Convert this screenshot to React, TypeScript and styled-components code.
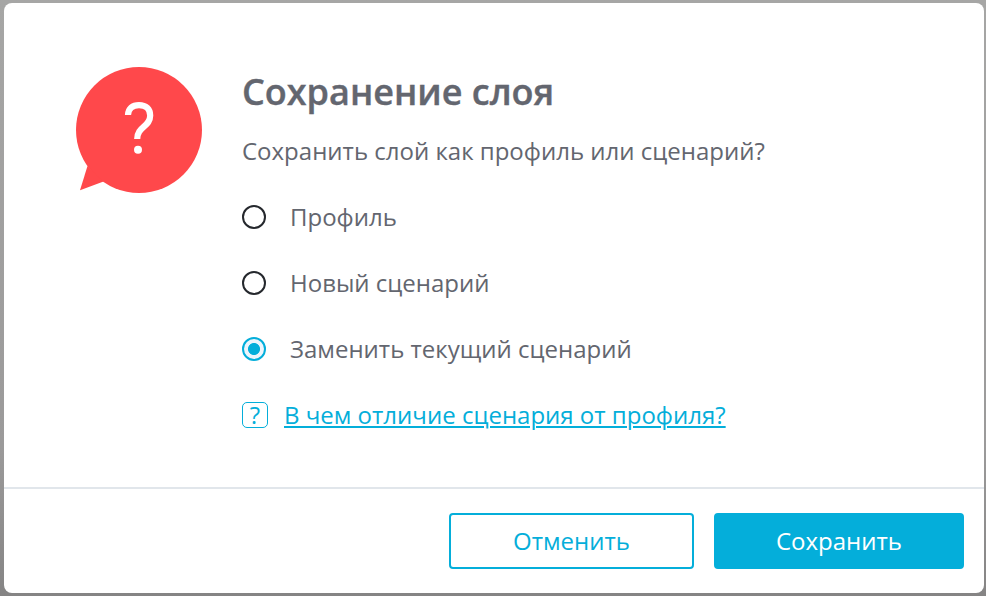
import React, { useState } from "react";
import styled, { createGlobalStyle } from "styled-components";

const ACCENT = "#04aeda";
const TEXT = "#63666f";

const GlobalStyle = createGlobalStyle`
  *, *::before, *::after { box-sizing: border-box; }
  html, body, #root { height: 100%; margin: 0; }
  body {
    font-family: "Open Sans", "Noto Sans", sans-serif;
    font-size: 24px;
    color: ${TEXT};
    overflow: hidden;
  }
`;

const Backdrop = styled.div`
  height: 100%;
  padding: 3px 2px 3px 4px;
  background: linear-gradient(#a6a6a5, #9b9a9a 75%, #858484);
`;

const Dialog = styled.section`
  height: 100%;
  display: flex;
  flex-direction: column;
  background: #fff;
  border-radius: 8px;
`;

const Content = styled.div`
  flex: 1;
  display: flex;
  align-items: flex-start;
  padding: 64px 72px 0;
`;

const Bubble = styled.svg`
  flex: none;
  width: 126px;
  height: 126px;
  margin-right: 40px;
`;

const Details = styled.div`
  flex: 1;
`;

const Title = styled.h1`
  margin: 0;
  font-size: 36px;
  font-weight: 600;
  line-height: 50px;
  -webkit-text-stroke: 0.4px currentColor;
`;

const Message = styled.p`
  margin: 17px 0 33px;
  line-height: 33px;
`;

const Option = styled.label`
  display: flex;
  align-items: center;
  gap: 24px;
  height: 33px;
  margin-bottom: 33px;
  cursor: pointer;
`;

const Radio = styled.input`
  appearance: none;
  flex: none;
  width: 24px;
  height: 24px;
  margin: 0;
  border: 2px solid #25282d;
  border-radius: 50%;

  &:checked {
    border-color: ${ACCENT};
    background: radial-gradient(circle, ${ACCENT} 5.6px, #edf5fc 6.4px);
  }
`;

const HelpRow = styled.div`
  display: flex;
  align-items: center;
  gap: 16px;
  height: 33px;
`;

const HelpBadge = styled.span`
  display: flex;
  align-items: center;
  justify-content: center;
  width: 26px;
  height: 26px;
  border: 1px solid ${ACCENT};
  border-radius: 5px;
  color: ${ACCENT};
  font-size: 24px;
  line-height: 24px;
`;

const HelpLink = styled.a`
  color: ${ACCENT};
  text-decoration: underline;
  text-decoration-thickness: 2px;
  text-underline-offset: 2px;
  line-height: 33px;
`;

const Footer = styled.footer`
  display: flex;
  justify-content: flex-end;
  gap: 20px;
  padding: 24px 20px;
  border-top: 2px solid #e1e6eb;
`;

const Button = styled.button<{ $primary?: boolean }>`
  width: ${(p) => (p.$primary ? 250 : 245)}px;
  height: 56px;
  padding: 0 0 2px;
  border: 2px solid ${ACCENT};
  border-radius: 4px;
  background: ${(p) => (p.$primary ? ACCENT : "#fff")};
  color: ${(p) => (p.$primary ? "#fff" : ACCENT)};
  font: inherit;
`;

const OPTIONS = ["Профиль", "Новый сценарий", "Заменить текущий сценарий"];

export default function App() {
  const [selected, setSelected] = useState(2);

  return (
    <>
      <GlobalStyle />
      <Backdrop>
        <Dialog role="dialog" aria-labelledby="dialog-title">
          <Content>
            <Bubble viewBox="0 0 126 126" aria-hidden="true">
              <circle cx="63" cy="63" r="63" fill="#ff484b" />
              <path d="M11.5 99 4 123.3 27.5 114.5Z" fill="#ff484b" />
              <path
                d="M52 48C52.2 41.5 56.5 38.1 63 38.1C70 38.1 74.2 42 74.2 48.5C74.2 60 61.2 59.5 61.2 72"
                fill="none"
                stroke="#fff"
                strokeWidth="6.2"
              />
              <circle cx="62" cy="82.8" r="4" fill="#fff" />
            </Bubble>
            <Details>
              <Title id="dialog-title">Сохранение слоя</Title>
              <Message>Сохранить слой как профиль или сценарий?</Message>
              {OPTIONS.map((label, index) => (
                <Option key={label}>
                  <Radio
                    type="radio"
                    name="target"
                    checked={selected === index}
                    onChange={() => setSelected(index)}
                  />
                  {label}
                </Option>
              ))}
              <HelpRow>
                <HelpBadge>?</HelpBadge>
                <HelpLink href="#">В чем отличие сценария от профиля?</HelpLink>
              </HelpRow>
            </Details>
          </Content>
          <Footer>
            <Button type="button">Отменить</Button>
            <Button type="button" $primary>
              Сохранить
            </Button>
          </Footer>
        </Dialog>
      </Backdrop>
    </>
  );
}
